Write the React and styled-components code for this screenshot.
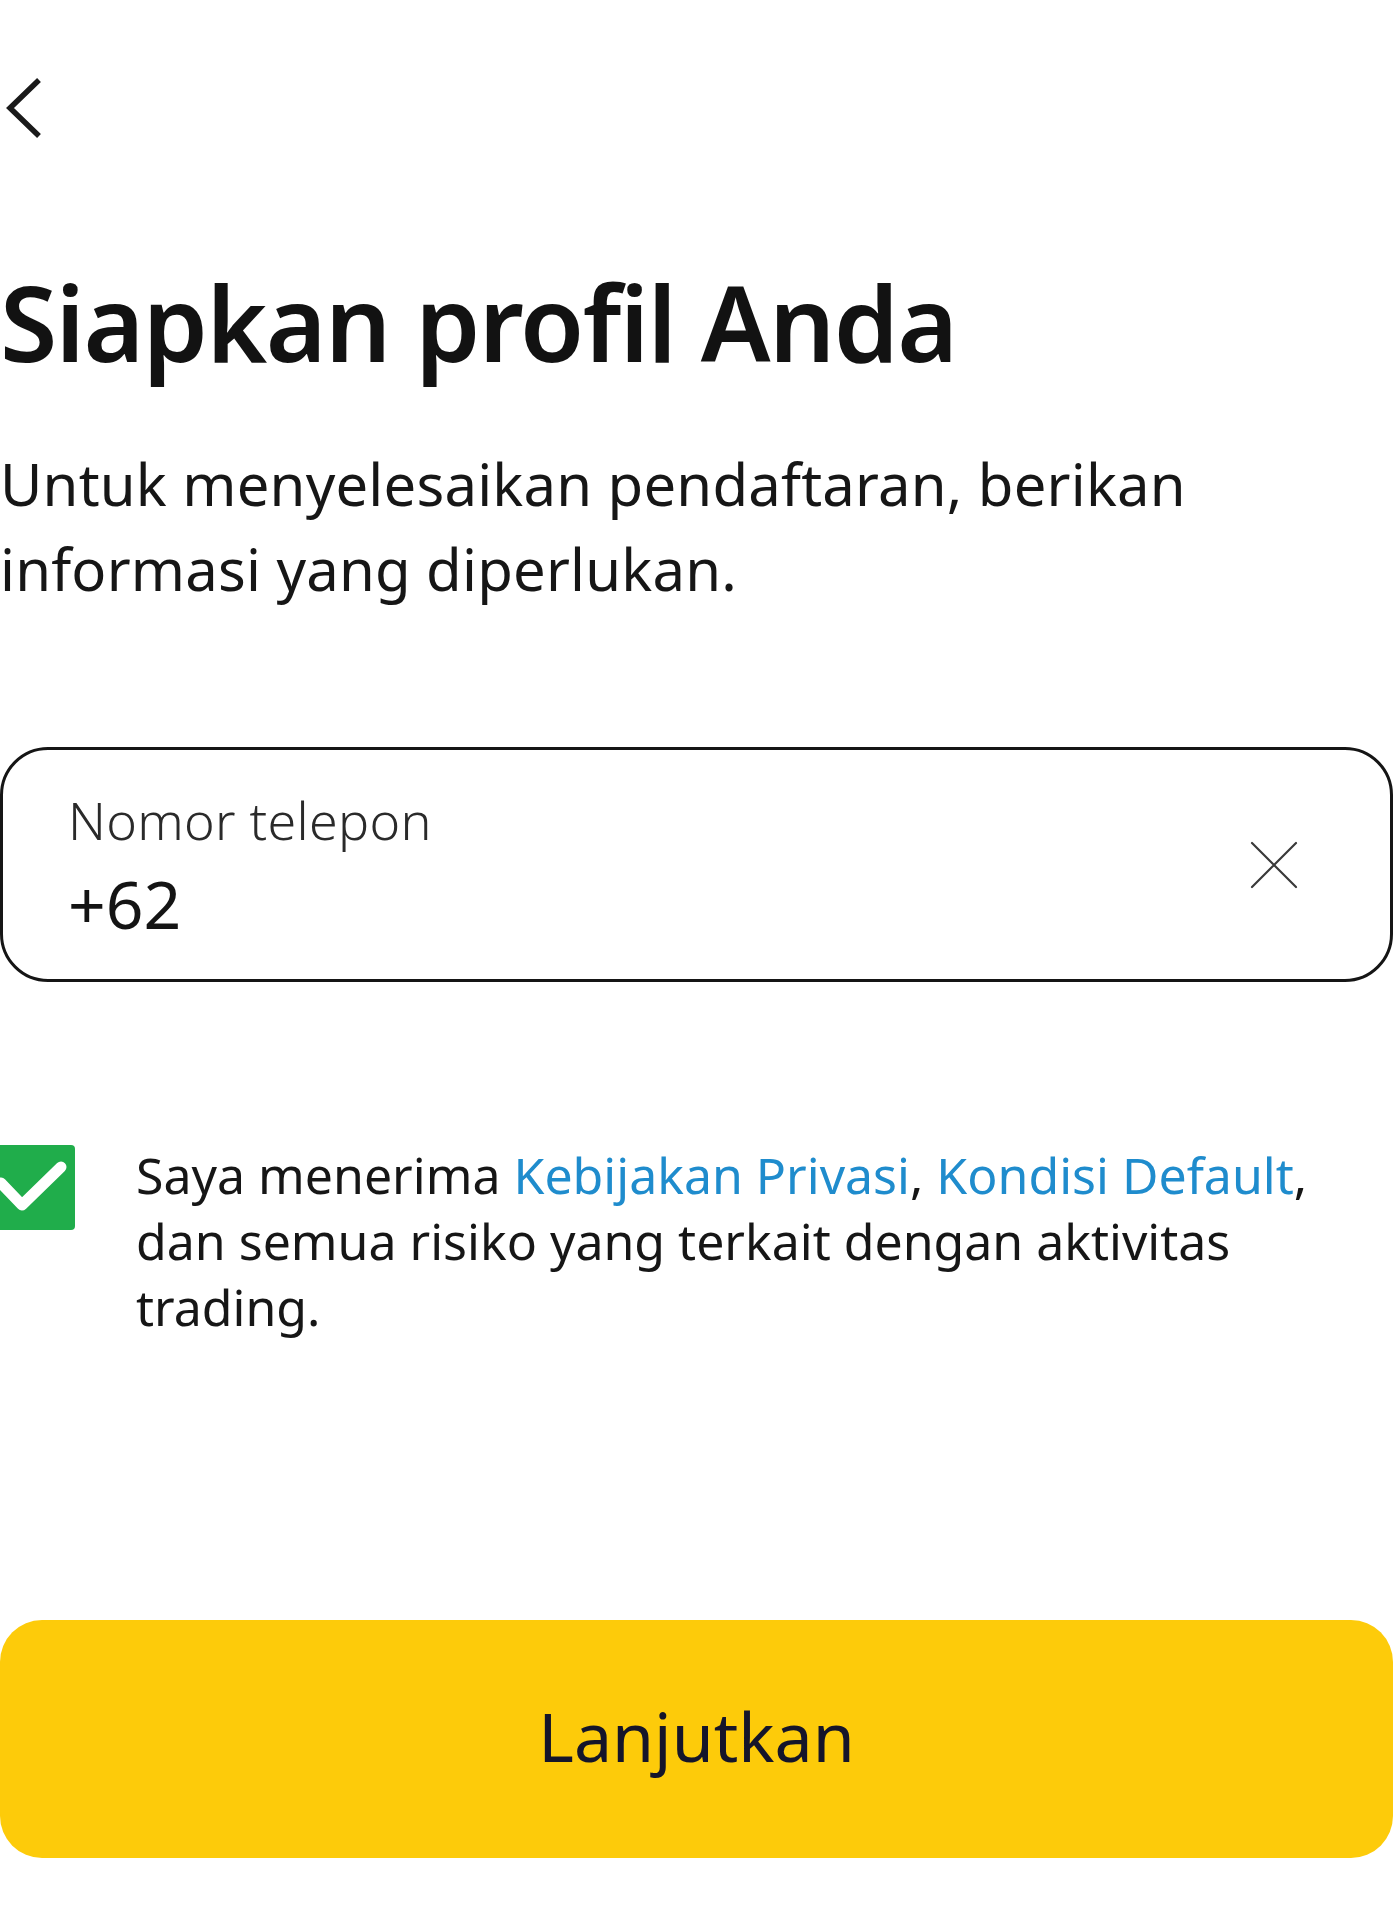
import React, { useState } from "react";
import styled, { createGlobalStyle } from "styled-components";

const GlobalStyle = createGlobalStyle`
  html, body {
    margin: 0;
    padding: 0;
    background: #ffffff;
  }

  body {
    font-family: "Noto Sans", "Open Sans", "Liberation Sans", sans-serif;
    color: #141414;
  }
`;

const StyledPage = styled.div`
  width: 1393px;
  padding-top: 78px;
  padding-bottom: 74px;
  display: flex;
  flex-direction: column;
`;

const StyledBack = styled.button`
  width: 40px;
  height: 60px;
  margin-left: 4px;
  padding: 0;
  border: none;
  background: none;
  cursor: pointer;
  display: flex;
  align-items: center;

  svg {
    display: block;
  }
`;

const StyledTitle = styled.h1`
  margin: 122px 0 0;
  font-size: 104px;
  font-weight: 600;
  line-height: 124px;
  letter-spacing: -1.6px;
  color: #121212;
`;

const StyledLead = styled.p`
  margin: 57px 0 0;
  font-size: 58px;
  font-weight: 400;
  line-height: 85px;
  letter-spacing: 0.2px;
  color: #161616;
`;

const StyledField = styled.label`
  margin-top: 136px;
  height: 235px;
  box-sizing: border-box;
  border: 3px solid #151515;
  border-radius: 48px;
  display: flex;
  align-items: center;
  padding: 0 92px 0 65px;

  .field-text {
    flex: 1;
    display: flex;
    flex-direction: column;
    gap: 16px;
  }

  .field-label {
    font-size: 52px;
    font-weight: 300;
    line-height: 60px;
    letter-spacing: 0.3px;
    color: #2a2a2a;
  }

  .field-value {
    font-size: 66px;
    font-weight: 400;
    line-height: 74px;
    color: #141414;
  }
`;

const StyledClear = styled.button`
  width: 48px;
  height: 48px;
  padding: 0;
  border: none;
  background: none;
  cursor: pointer;

  svg {
    display: block;
  }
`;

const StyledConsent = styled.div`
  margin-top: 160px;
  display: flex;
  align-items: flex-start;
  gap: 61px;

  .terms {
    margin: 0;
    font-size: 50px;
    line-height: 66px;
    color: #161616;
  }

  a {
    color: #1f8ccd;
    text-decoration: none;
  }
`;

const StyledCheck = styled.button`
  flex: none;
  width: 85px;
  height: 85px;
  margin: 3px 0 0 -10px;
  padding: 0;
  border: none;
  border-radius: 4px;
  background: ${({ checked }) => (checked ? "#20ad4b" : "#ffffff")};
  box-shadow: ${({ checked }) => (checked ? "none" : "inset 0 0 0 3px #151515")};
  cursor: pointer;
  display: flex;
  align-items: center;
  justify-content: center;

  svg {
    display: block;
  }
`;

const StyledSubmit = styled.button`
  margin-top: 280px;
  height: 238px;
  border: none;
  border-radius: 42px;
  background: #fdcb0a;
  color: #15152a;
  font-family: inherit;
  font-size: 68px;
  font-weight: 400;
  cursor: pointer;
  display: flex;
  align-items: center;
  justify-content: center;
  padding-bottom: 8px;
`;

const ChevronLeft = () => (
  <svg width="40" height="62" viewBox="0 0 40 62" fill="none">
    <path
      d="M35 3 L6 31 L35 59"
      stroke="#1a1a1a"
      strokeWidth="5.5"
      strokeLinejoin="miter"
    />
  </svg>
);

const CloseIcon = () => (
  <svg width="48" height="48" viewBox="0 0 48 48" fill="none">
    <path
      d="M2 2 L46 46 M46 2 L2 46"
      stroke="#3a3a3a"
      strokeWidth="2.2"
      strokeLinecap="round"
    />
  </svg>
);

const CheckIcon = () => (
  <svg width="85" height="85" viewBox="0 0 85 85" fill="none">
    <path
      d="M11 38 L32 60 L71 22"
      stroke="#ffffff"
      strokeWidth="11"
      strokeLinecap="round"
      strokeLinejoin="round"
    />
  </svg>
);

const PhoneField = ({ value, onClear }) => (
  <StyledField>
    <div className="field-text">
      <span className="field-label">Nomor telepon</span>
      <span className="field-value">{value}</span>
    </div>
    <StyledClear type="button" aria-label="Hapus" onClick={onClear}>
      <CloseIcon />
    </StyledClear>
  </StyledField>
);

const Consent = ({ checked, onToggle }) => (
  <StyledConsent>
    <StyledCheck
      type="button"
      checked={checked}
      aria-pressed={checked}
      onClick={onToggle}
    >
      {checked && <CheckIcon />}
    </StyledCheck>
    <p className="terms">
      Saya menerima <a href="#privasi">Kebijakan Privasi</a>,{" "}
      <a href="#kondisi">Kondisi Default</a>, dan semua risiko yang terkait
      dengan aktivitas trading.
    </p>
  </StyledConsent>
);

const App = () => {
  const [phone, setPhone] = useState("+62");
  const [agreed, setAgreed] = useState(true);

  return (
    <>
      <GlobalStyle />
      <StyledPage>
        <StyledBack type="button" aria-label="Kembali">
          <ChevronLeft />
        </StyledBack>
        <StyledTitle>Siapkan profil Anda</StyledTitle>
        <StyledLead>
          Untuk menyelesaikan pendaftaran, berikan informasi yang diperlukan.
        </StyledLead>
        <PhoneField value={phone} onClear={() => setPhone("+62")} />
        <Consent checked={agreed} onToggle={() => setAgreed(!agreed)} />
        <StyledSubmit type="button">Lanjutkan</StyledSubmit>
      </StyledPage>
    </>
  );
};

export default App;
